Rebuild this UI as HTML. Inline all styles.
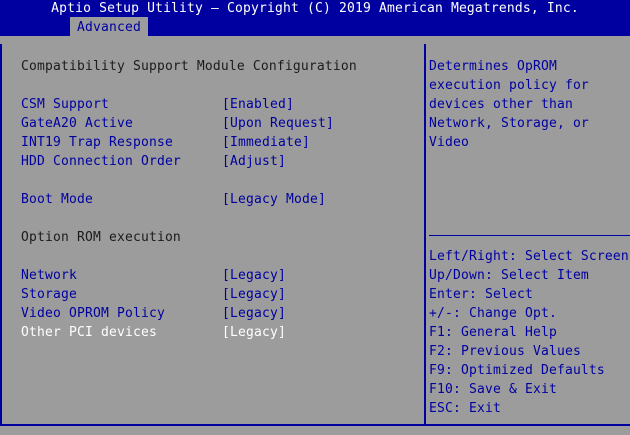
<!DOCTYPE html>
<html><head><style>
body{margin:0;width:630px;height:435px;background:#9c9c9c;overflow:hidden;position:relative;font-family:"DejaVu Sans Mono","Liberation Mono",monospace;font-size:13px;letter-spacing:0.17px;}
.t{position:absolute;white-space:pre;line-height:19px;height:19px;}
.b{color:#0000a0}.k{color:#1c1c1c}.w{color:#fff}
</style></head><body>
<div style="position:absolute;left:0;top:0;width:630px;height:36px;background:#0000a0"></div>
<div style="position:absolute;left:70px;top:17px;width:78px;height:19px;background:#9c9c9c"></div>
<div class="t w" style="left:0;width:630px;text-align:center;top:-1px">Aptio Setup Utility – Copyright (C) 2019 American Megatrends, Inc.</div>
<div class="t b" style="left:77px;top:18px">Advanced</div>
<div style="position:absolute;left:0;top:44px;width:2px;height:381px;background:#0000a0"></div>
<div style="position:absolute;left:424px;top:44px;width:2px;height:381px;background:#0000a0"></div>
<div style="position:absolute;left:0;top:424px;width:630px;height:2px;background:#0000a0"></div>
<div style="position:absolute;left:429px;top:235px;width:201px;height:1px;background:#0000a0"></div>
<div class="t k" style="left:21px;top:57px">Compatibility Support Module Configuration</div>
<div class="t b" style="left:21px;top:95px">CSM Support</div><div class="t b" style="left:222px;top:95px">[Enabled]</div>
<div class="t b" style="left:21px;top:114px">GateA20 Active</div><div class="t b" style="left:222px;top:114px">[Upon Request]</div>
<div class="t b" style="left:21px;top:133px">INT19 Trap Response</div><div class="t b" style="left:222px;top:133px">[Immediate]</div>
<div class="t b" style="left:21px;top:152px">HDD Connection Order</div><div class="t b" style="left:222px;top:152px">[Adjust]</div>
<div class="t b" style="left:21px;top:190px">Boot Mode</div><div class="t b" style="left:222px;top:190px">[Legacy Mode]</div>
<div class="t k" style="left:21px;top:228px">Option ROM execution</div>
<div class="t b" style="left:21px;top:266px">Network</div><div class="t b" style="left:222px;top:266px">[Legacy]</div>
<div class="t b" style="left:21px;top:285px">Storage</div><div class="t b" style="left:222px;top:285px">[Legacy]</div>
<div class="t b" style="left:21px;top:304px">Video OPROM Policy</div><div class="t b" style="left:222px;top:304px">[Legacy]</div>
<div class="t w" style="left:21px;top:323px">Other PCI devices</div><div class="t w" style="left:222px;top:323px">[Legacy]</div>
<div class="t b" style="left:429px;top:57px">Determines OpROM</div>
<div class="t b" style="left:429px;top:76px">execution policy for</div>
<div class="t b" style="left:429px;top:95px">devices other than</div>
<div class="t b" style="left:429px;top:114px">Network, Storage, or</div>
<div class="t b" style="left:429px;top:133px">Video</div>
<div class="t b" style="left:429px;top:247px">Left/Right: Select Screen</div>
<div class="t b" style="left:429px;top:266px">Up/Down: Select Item</div>
<div class="t b" style="left:429px;top:285px">Enter: Select</div>
<div class="t b" style="left:429px;top:304px">+/-: Change Opt.</div>
<div class="t b" style="left:429px;top:323px">F1: General Help</div>
<div class="t b" style="left:429px;top:342px">F2: Previous Values</div>
<div class="t b" style="left:429px;top:361px">F9: Optimized Defaults</div>
<div class="t b" style="left:429px;top:380px">F10: Save &amp; Exit</div>
<div class="t b" style="left:429px;top:399px">ESC: Exit</div>
</body></html>
